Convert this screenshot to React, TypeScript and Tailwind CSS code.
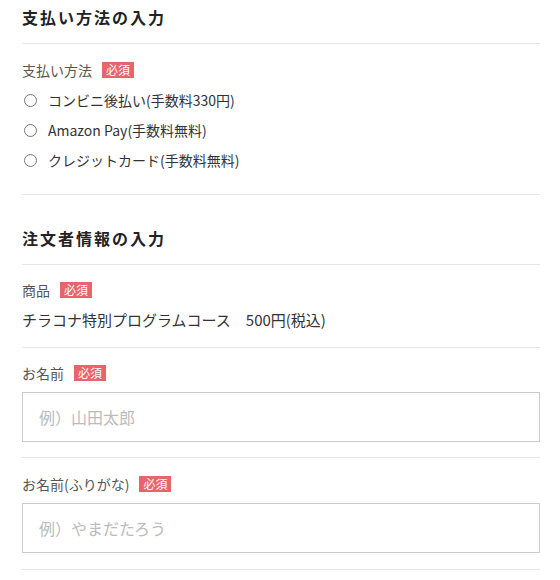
import React from "react";

const font = { fontFamily: '"Noto Sans CJK JP", "Noto Sans", sans-serif' };

function Badge() {
  return (
    <span className="ml-[10px] inline-flex h-4 w-8 items-center justify-center bg-[#e8646b] text-[12px] leading-none text-white">
      必須
    </span>
  );
}

function Label({ children }: { children: React.ReactNode }) {
  return (
    <div className="flex h-5 items-center text-[14px] leading-5 text-[#555]">
      <span>{children}</span>
      <Badge />
    </div>
  );
}

function Radio({ label }: { label: string }) {
  return (
    <label className="flex h-[30px] items-center text-[14px] text-[#333]">
      <span className="ml-[2px] mr-[11px] h-[13px] w-[13px] rounded-full border border-[#777] bg-white" />
      <span>{label}</span>
    </label>
  );
}

function Heading({ children, className = "" }: { children: React.ReactNode; className?: string }) {
  return (
    <h2
      className={`border-b border-[#e6e6e6] pb-[14px] text-[16px] font-bold leading-6 tracking-[0.125em] text-[#222] ${className}`}
    >
      {children}
    </h2>
  );
}

function TextField({ placeholder }: { placeholder: string }) {
  return (
    <input
      type="text"
      placeholder={placeholder}
      className="mt-[9px] block h-[50px] w-full border border-[#cccccc] bg-white px-[16px] text-[16px] text-[#333] outline-none placeholder:text-[#bbbbbb]"
      style={font}
    />
  );
}

export default function App() {
  return (
    <div className="min-h-[580px] bg-white pl-[22px] pr-[20px]" style={font}>
      <Heading className="pt-[5px]">支払い方法の入力</Heading>

      <div className="border-b border-[#e6e6e6] pb-[19px] pt-4">
        <Label>支払い方法</Label>
        <div className="mt-[5px] flex flex-col">
          <Radio label="コンビニ後払い(手数料330円)" />
          <Radio label="Amazon Pay(手数料無料)" />
          <Radio label="クレジットカード(手数料無料)" />
        </div>
      </div>

      <Heading className="pt-[31px]">注文者情報の入力</Heading>

      <div className="border-b border-[#e6e6e6] pb-[15px] pt-[15px]">
        <Label>商品</Label>
        <div className="mt-2 text-[15px] leading-6 text-[#333]">
          チラコナ特別プログラムコース　500円(税込)
        </div>
      </div>

      <div className="border-b border-[#e6e6e6] pb-[15px] pt-[15px]">
        <Label>お名前</Label>
        <TextField placeholder="例）山田太郎" />
      </div>

      <div className="border-b border-[#e6e6e6] pb-4 pt-4">
        <Label>お名前(ふりがな)</Label>
        <TextField placeholder="例）やまだたろう" />
      </div>
    </div>
  );
}
